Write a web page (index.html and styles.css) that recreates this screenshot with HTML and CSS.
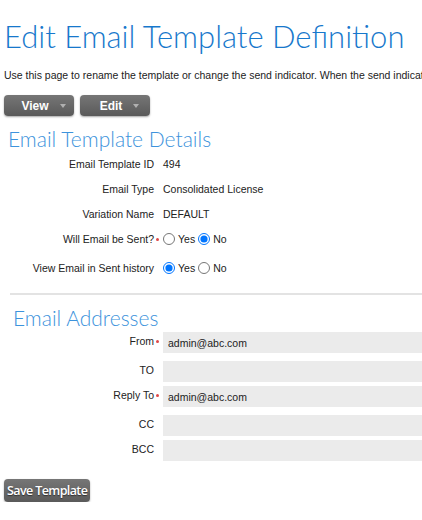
FILE: index.html
```html
<!DOCTYPE html>
<html lang="en">

<head>
	<meta charset="UTF-8">
	<title>Edit Email Template Definition</title>
	<link rel="stylesheet" href="styles.css">
</head>

<body>
	<div class="page">
		<h1 class="title">Edit Email Template Definition</h1>
		<p class="intro">Use this page to rename the template or change the send indicator. When the send indicator is set to No, the email will not be sent.</p>

		<div class="actions">
			<button class="btn menu">View <span class="caret"></span></button>
			<button class="btn menu">Edit <span class="caret"></span></button>
		</div>

		<h2 class="section">Email Template Details</h2>
		<div class="details">
			<div class="row">
				<div class="label">Email Template ID</div>
				<div class="value">494</div>
			</div>
			<div class="row">
				<div class="label">Email Type</div>
				<div class="value">Consolidated License</div>
			</div>
			<div class="row">
				<div class="label">Variation Name</div>
				<div class="value">DEFAULT</div>
			</div>
			<div class="row">
				<div class="label req">Will Email be Sent?</div>
				<div class="value">
					<label class="radio"><input type="radio" name="send">Yes</label>
					<label class="radio"><input type="radio" name="send" checked>No</label>
				</div>
			</div>
			<div class="row tall">
				<div class="label">View Email in Sent history</div>
				<div class="value">
					<label class="radio"><input type="radio" name="hist" checked>Yes</label>
					<label class="radio"><input type="radio" name="hist">No</label>
				</div>
			</div>
		</div>

		<hr class="divider">

		<h2 class="section addr">Email Addresses</h2>
		<div class="fields">
			<div class="field">
				<div class="label req">From</div>
				<input class="input" type="text" value="admin@abc.com">
			</div>
			<div class="field spaced">
				<div class="label">TO</div>
				<input class="input" type="text">
			</div>
			<div class="field">
				<div class="label req">Reply To</div>
				<input class="input" type="text" value="admin@abc.com">
			</div>
			<div class="field spaced">
				<div class="label">CC</div>
				<input class="input" type="text">
			</div>
			<div class="field">
				<div class="label">BCC</div>
				<input class="input" type="text">
			</div>
		</div>

		<button class="btn save">Save Template</button>
	</div>
</body>

</html>
```

FILE: styles.css
```css
body {
	margin: 0;
	font-family: "Liberation Sans", Arial, sans-serif;
	font-size: 10.5px;
	color: #222;
	overflow: hidden;
}

.page {
	width: 422px;
	overflow: hidden;
}

.title {
	margin: 16px 0 0 4px;
	font-family: Lato, sans-serif;
	font-weight: 300;
	font-size: 31px;
	line-height: 40px;
	color: #1778cc;
	white-space: nowrap;
}

.intro {
	margin: 12px 0 0 4px;
	line-height: 14px;
	white-space: nowrap;
}

.actions {
	display: flex;
	gap: 6px;
	margin: 13px 0 0 4px;
}

.btn {
	border: 0;
	border-radius: 4px;
	background: linear-gradient(#767676, #5a5a5a);
	box-shadow: 0 1px 2px rgba(0, 0, 0, .35);
	color: #fff;
	cursor: pointer;
}

.menu {
	display: flex;
	align-items: center;
	justify-content: center;
	gap: 11px;
	width: 70px;
	height: 21px;
	padding: 0 0 0 9px;
	font-family: "Liberation Sans", Arial, sans-serif;
	font-size: 12px;
	font-weight: bold;
}

.caret {
	width: 0;
	height: 0;
	border-left: 3.5px solid transparent;
	border-right: 3.5px solid transparent;
	border-top: 4px solid #b0b0b0;
}

.section {
	margin: 11px 0 0 8px;
	font-family: Lato, sans-serif;
	font-weight: 300;
	font-size: 21px;
	line-height: 24px;
	color: #3d93dc;
}

.row {
	display: flex;
	align-items: center;
	height: 25px;
}

.row.tall {
	height: 34px;
}

.label {
	position: relative;
	flex: none;
	width: 163px;
	padding-right: 9px;
	text-align: right;
	box-sizing: border-box;
}

.label.req::after {
	content: "";
	position: absolute;
	right: 4px;
	top: 50%;
	width: 3px;
	height: 3px;
	margin-top: -1px;
	border-radius: 50%;
	background: #e04848;
}

.value {
	display: flex;
	align-items: center;
}

.radio {
	display: flex;
	align-items: center;
	margin-right: 3px;
}

.radio input {
	margin: 0 3px 0 0;
	width: 12px;
	height: 12px;
}

.divider {
	margin: 8px 0 0 10px;
	border: 0;
	border-top: 2px solid #e3e3e3;
}

.section.addr {
	margin: 11px 0 0 13px;
}

.fields {
	display: flex;
	flex-direction: column;
	gap: 4px;
	margin-top: 2px;
}

.field {
	display: flex;
	align-items: center;
}

.field .label {
	margin-top: -3px;
}

.field.spaced {
	margin-top: 4px;
}

.input {
	width: 270px;
	height: 21px;
	margin: 0;
	padding: 0 5px;
	border: 0;
	background: #ebebeb;
	font-family: "Liberation Sans", Arial, sans-serif;
	font-size: 10.5px;
	color: #222;
	box-sizing: border-box;
}

.save {
	display: block;
	margin: 18px 0 0 4px;
	padding: 0 3px;
	height: 23px;
	font-family: "Open Sans", sans-serif;
	font-size: 12.5px;
	font-weight: 600;
	letter-spacing: -0.6px;
	text-shadow: 0 1px 1px rgba(0, 0, 0, .5);
}
```
